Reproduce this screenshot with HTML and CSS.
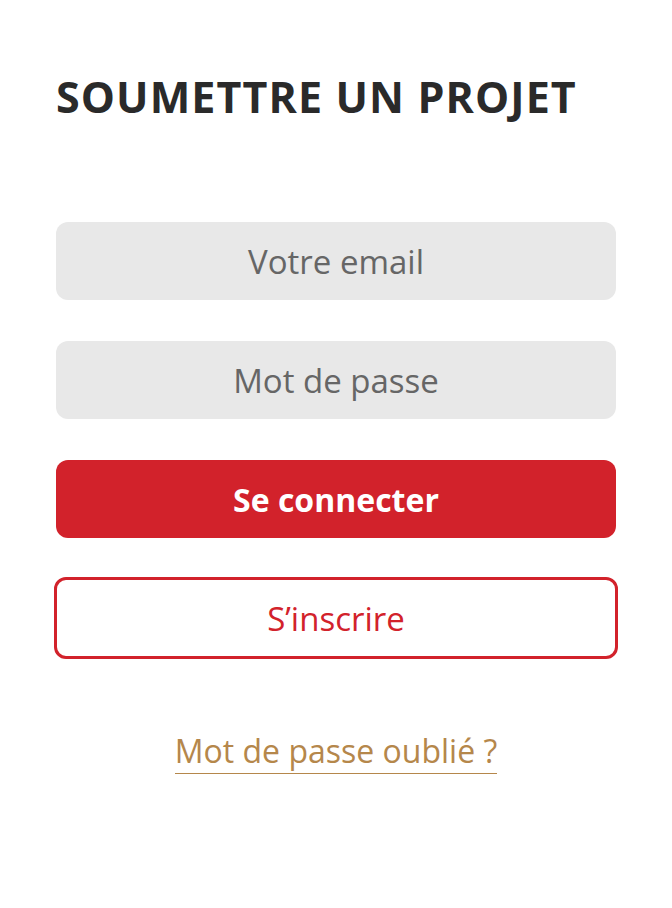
FILE: index.html
```html
<!DOCTYPE html>
<html lang="fr">
<head>
  <meta charset="UTF-8" />
  <title>Soumettre un projet</title>
  <link rel="stylesheet" href="styles.css">
</head>
<body>

  <div class="page">
    <h1 class="page-title">SOUMETTRE UN PROJET</h1>

    <!-- formulaire de connexion -->
    <form class="login-form" onsubmit="return false;">
      <input type="email" class="field" placeholder="Votre email" />
      <input type="password" class="field" placeholder="Mot de passe" />
      <button type="submit" class="btn btn-primary">Se connecter</button>
      <button type="button" class="btn btn-outline">S’inscrire</button>
    </form>

    <div class="forgot">
      <a href="#">Mot de passe oublié ?</a>
    </div>
  </div>

</body>
</html>
```

FILE: styles.css
```css
body {
  margin: 0;
  font-family: "Open Sans", "Noto Sans", sans-serif;
  background: #fff;
}

.page {
  padding: 0 56px;
}

.page-title {
  margin: 0;
  padding-top: 70px;
  font-size: 43px;
  line-height: 54px;
  font-weight: 700;
  letter-spacing: 1.1px;
  color: #2a2a2a;
}

.login-form {
  display: flex;
  flex-direction: column;
  gap: 41px;
  margin-top: 98px;
}

.field,
.btn {
  box-sizing: border-box;
  width: 100%;
  height: 78px;
  border-radius: 12px;
  font-family: inherit;
  font-size: 33px;
  text-align: center;
  outline: none;
}

.field {
  border: none;
  background: #e8e8e8;
  color: #555;
}

.field::placeholder {
  color: #666;
}

.btn {
  cursor: pointer;
}

.btn-primary {
  border: none;
  background: #d2222b;
  color: #fff;
  font-weight: 700;
  font-size: 32px;
}

.btn-outline {
  width: calc(100% + 4px);
  height: 82px;
  margin-left: -2px;
  margin-top: -2px;
  border: 3px solid #d2222b;
  background: #fff;
  color: #d2222b;
}

.forgot {
  display: flex;
  justify-content: center;
  margin-top: 74px;
}

.forgot a {
  font-size: 32px;
  line-height: 36px;
  padding-bottom: 4px;
  color: #b5874b;
  text-decoration: none;
  border-bottom: 1px solid #b5874b;
}
```
